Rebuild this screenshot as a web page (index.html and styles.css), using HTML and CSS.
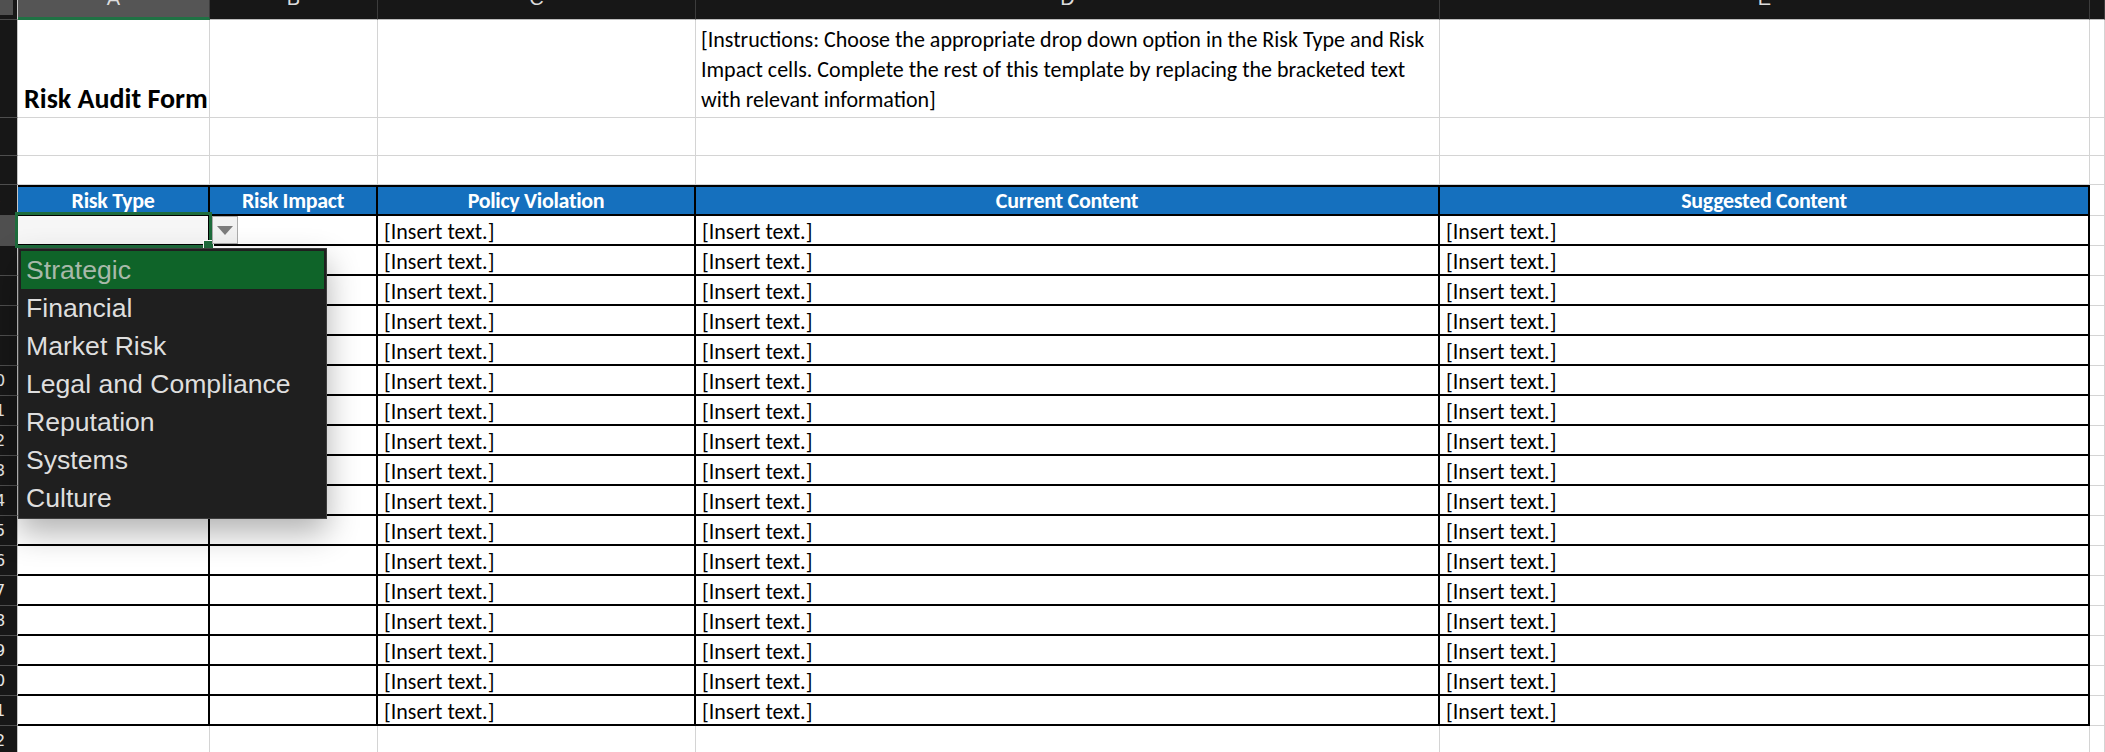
FILE: index.html
```html
<!DOCTYPE html>
<html lang="en">
<head>
<meta charset="utf-8">
<title>Risk Audit Form</title>
<link rel="stylesheet" href="styles.css">
</head>
<body>
<div class="sheet">
  <div class="row r-colhead">
    <div class="corner"><span class="corner-box"></span></div>
    <div class="ch ch-sel"><span>A</span></div>
    <div class="ch"><span>B</span></div>
    <div class="ch"><span>C</span></div>
    <div class="ch"><span>D</span></div>
    <div class="ch"><span>E</span></div>
    <div class="ch"></div>
  </div>

  <div class="row r1">
    <div class="rh"><span>1</span></div>
    <div class="c title-cell"><span class="title">Risk Audit Form</span></div>
    <div class="c"></div>
    <div class="c"></div>
    <div class="c instr">[Instructions: Choose the appropriate drop down option in the Risk Type and Risk<br>Impact cells. Complete the rest of this template by replacing the bracketed text<br>with relevant information]</div>
    <div class="c"></div>
    <div class="c"></div>
  </div>

  <div class="row r2">
    <div class="rh"><span>2</span></div>
    <div class="c"></div><div class="c"></div><div class="c"></div><div class="c"></div><div class="c"></div><div class="c"></div>
  </div>

  <div class="row r3">
    <div class="rh"><span>3</span></div>
    <div class="c"></div><div class="c"></div><div class="c"></div><div class="c"></div><div class="c"></div><div class="c"></div>
  </div>

  <div class="row r-head">
    <div class="rh"><span>4</span></div>
    <div class="c t th">Risk Type</div>
    <div class="c t th">Risk Impact</div>
    <div class="c t th">Policy Violation</div>
    <div class="c t th">Current Content</div>
    <div class="c t th">Suggested Content</div>
    <div class="c"></div>
  </div>

  <div class="row r-data">
    <div class="rh rh-sel"><span>5</span></div>
    <div class="c t sel-cell">
      <div class="sel-box"></div>
      <div class="fill-handle"></div>
      <div class="dd-btn"><svg width="16" height="9" viewBox="0 0 16 9"><polygon points="0,0 16,0 8,9" fill="#7b7b7b"/></svg></div>
      <div class="dd-list">
        <div class="dd-item active">Strategic</div>
        <div class="dd-item">Financial</div>
        <div class="dd-item">Market Risk</div>
        <div class="dd-item">Legal and Compliance</div>
        <div class="dd-item">Reputation</div>
        <div class="dd-item">Systems</div>
        <div class="dd-item">Culture</div>
      </div>
    </div>
    <div class="c t"></div>
    <div class="c t">[Insert text.]</div>
    <div class="c t">[Insert text.]</div>
    <div class="c t">[Insert text.]</div>
    <div class="c"></div>
  </div>

  <div class="row r-data"><div class="rh"><span>6</span></div><div class="c t"></div><div class="c t"></div><div class="c t">[Insert text.]</div><div class="c t">[Insert text.]</div><div class="c t">[Insert text.]</div><div class="c"></div></div>
  <div class="row r-data"><div class="rh"><span>7</span></div><div class="c t"></div><div class="c t"></div><div class="c t">[Insert text.]</div><div class="c t">[Insert text.]</div><div class="c t">[Insert text.]</div><div class="c"></div></div>
  <div class="row r-data"><div class="rh"><span>8</span></div><div class="c t"></div><div class="c t"></div><div class="c t">[Insert text.]</div><div class="c t">[Insert text.]</div><div class="c t">[Insert text.]</div><div class="c"></div></div>
  <div class="row r-data"><div class="rh"><span>9</span></div><div class="c t"></div><div class="c t"></div><div class="c t">[Insert text.]</div><div class="c t">[Insert text.]</div><div class="c t">[Insert text.]</div><div class="c"></div></div>
  <div class="row r-data"><div class="rh"><span>10</span></div><div class="c t"></div><div class="c t"></div><div class="c t">[Insert text.]</div><div class="c t">[Insert text.]</div><div class="c t">[Insert text.]</div><div class="c"></div></div>
  <div class="row r-data"><div class="rh"><span>11</span></div><div class="c t"></div><div class="c t"></div><div class="c t">[Insert text.]</div><div class="c t">[Insert text.]</div><div class="c t">[Insert text.]</div><div class="c"></div></div>
  <div class="row r-data"><div class="rh"><span>12</span></div><div class="c t"></div><div class="c t"></div><div class="c t">[Insert text.]</div><div class="c t">[Insert text.]</div><div class="c t">[Insert text.]</div><div class="c"></div></div>
  <div class="row r-data"><div class="rh"><span>13</span></div><div class="c t"></div><div class="c t"></div><div class="c t">[Insert text.]</div><div class="c t">[Insert text.]</div><div class="c t">[Insert text.]</div><div class="c"></div></div>
  <div class="row r-data"><div class="rh"><span>14</span></div><div class="c t"></div><div class="c t"></div><div class="c t">[Insert text.]</div><div class="c t">[Insert text.]</div><div class="c t">[Insert text.]</div><div class="c"></div></div>
  <div class="row r-data"><div class="rh"><span>15</span></div><div class="c t"></div><div class="c t"></div><div class="c t">[Insert text.]</div><div class="c t">[Insert text.]</div><div class="c t">[Insert text.]</div><div class="c"></div></div>
  <div class="row r-data"><div class="rh"><span>16</span></div><div class="c t"></div><div class="c t"></div><div class="c t">[Insert text.]</div><div class="c t">[Insert text.]</div><div class="c t">[Insert text.]</div><div class="c"></div></div>
  <div class="row r-data"><div class="rh"><span>17</span></div><div class="c t"></div><div class="c t"></div><div class="c t">[Insert text.]</div><div class="c t">[Insert text.]</div><div class="c t">[Insert text.]</div><div class="c"></div></div>
  <div class="row r-data"><div class="rh"><span>18</span></div><div class="c t"></div><div class="c t"></div><div class="c t">[Insert text.]</div><div class="c t">[Insert text.]</div><div class="c t">[Insert text.]</div><div class="c"></div></div>
  <div class="row r-data"><div class="rh"><span>19</span></div><div class="c t"></div><div class="c t"></div><div class="c t">[Insert text.]</div><div class="c t">[Insert text.]</div><div class="c t">[Insert text.]</div><div class="c"></div></div>
  <div class="row r-data"><div class="rh"><span>20</span></div><div class="c t"></div><div class="c t"></div><div class="c t">[Insert text.]</div><div class="c t">[Insert text.]</div><div class="c t">[Insert text.]</div><div class="c"></div></div>
  <div class="row r-data"><div class="rh"><span>21</span></div><div class="c t"></div><div class="c t"></div><div class="c t">[Insert text.]</div><div class="c t">[Insert text.]</div><div class="c t">[Insert text.]</div><div class="c"></div></div>

  <div class="row r-last">
    <div class="rh"><span>22</span></div>
    <div class="c"></div><div class="c"></div><div class="c"></div><div class="c"></div><div class="c"></div><div class="c"></div>
  </div>
</div>
</body>
</html>
```

FILE: styles.css
```css
* { box-sizing: border-box; }

html, body {
  margin: 0;
  padding: 0;
  background: #ffffff;
  overflow: hidden;
}

body {
  width: 2105px;
  height: 752px;
}

.sheet {
  display: flex;
  flex-direction: column;
  font-family: Carlito, Calibri, "Liberation Sans Narrow", "DejaVu Sans Condensed", sans-serif;
  color: #000;
}

.row {
  display: grid;
  grid-template-columns: 18px 192px 168px 318px 744px 650px 15px;
  flex: none;
}

.r-colhead { height: 20px; }
.r1 { height: 98px; }
.r2 { height: 38px; }
.r3 { height: 29px; }
.r-head { height: 31px; }
.r-data { height: 30px; }
.r-last { height: 30px; }

/* ordinary cells with gridlines */
.c {
  min-width: 0;
  border-right: 1px solid #d4d4d4;
  border-bottom: 1px solid #d4d4d4;
}

/* row headers */
.rh {
  background: #171717;
  border-right: 1px solid #c6c6c6;
  border-bottom: 1px solid #4e4e4e;
  overflow: hidden;
  display: flex;
  align-items: center;
}

.rh span {
  flex: none;
  width: 24px;
  margin-left: -17px;
  text-align: center;
  font: 16px/18px "DejaVu Sans", sans-serif;
  color: #e6e6e6;
}

.rh-sel { background: #4f4f4f; }

/* column headers */
.corner {
  background: #171717;
  border-right: 1px solid #c6c6c6;
  border-bottom: 1px solid #4a4a4a;
}

.corner-box {
  display: block;
  width: 13px;
  height: 15px;
  background: #505050;
}

.ch {
  background: #171717;
  border-right: 1px solid #3c3c3c;
  border-bottom: 1px solid #bdbdbd;
  overflow: hidden;
  display: flex;
  justify-content: center;
  align-items: flex-end;
  padding-bottom: 11px;
}

.ch span {
  font: 20px/20px "Liberation Sans", Arial, sans-serif;
  color: #dcdcdc;
}

.ch-sel {
  background: #555555;
  border-bottom: 3px solid #1f7244;
  padding-bottom: 9px;
}

/* title + instructions */
.title-cell {
  display: flex;
  align-items: flex-end;
  padding: 0 0 4px 6px;
}

.title {
  font-weight: 700;
  font-size: 28px;
  line-height: 28px;
  white-space: nowrap;
}

.instr {
  padding: 5px 0 0 5px;
  font-size: 22px;
  line-height: 30px;
  white-space: nowrap;
}

/* bordered table */
.t {
  border-right: 2px solid #000;
  border-bottom: 2px solid #000;
  padding: 3px 0 0 6px;
  font-size: 22px;
  line-height: 26px;
  white-space: nowrap;
  overflow: hidden;
}

.th {
  border-top: 2px solid #000;
  background: #1570be;
  color: #ffffff;
  font-weight: 700;
  font-size: 22px;
  line-height: 25px;
  letter-spacing: -0.3px;
  text-align: center;
  padding: 1px 0 0 0;
}

/* selected cell with data-validation dropdown */
.sel-cell {
  position: relative;
  overflow: visible;
  background: #f6f6f6;
  z-index: 5;
}

.sel-box {
  position: absolute;
  left: -3px;
  top: -4px;
  width: 197px;
  height: 36px;
  border: 3px solid #1e6c3c;
}

.fill-handle {
  position: absolute;
  left: 185px;
  top: 24px;
  width: 11px;
  height: 9px;
  background: #1e6c3c;
  border: 1px solid #ffffff;
}

.dd-btn {
  position: absolute;
  left: 194px;
  top: 0;
  width: 26px;
  height: 28px;
  background: #f1f1f1;
  border: 1px solid #ababab;
  display: flex;
  align-items: center;
  justify-content: center;
}

.dd-list {
  position: absolute;
  left: 0;
  top: 32px;
  width: 309px;
  height: 271px;
  background: #1f1f1f;
  border: 1px solid #3e3e3e;
  padding: 2px;
  box-shadow: 0 14px 30px rgba(0, 0, 0, 0.3);
  font-family: "Liberation Sans", Arial, sans-serif;
  font-size: 26.6px;
  color: #dedede;
}

.dd-item {
  height: 38px;
  line-height: 38px;
  padding-left: 5px;
  white-space: nowrap;
}

.dd-item.active {
  background: #0f6429;
  color: #a8b9aa;
}
```
